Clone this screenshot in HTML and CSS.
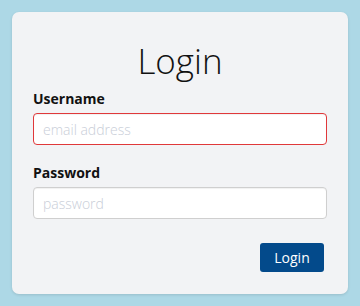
FILE: index.html
```html
<!DOCTYPE html>
<html>
<head>
<meta charset="utf-8">
<link rel="stylesheet" href="styles.css">
</head>
<body>
<div class="card">
  <h1 class="title">Login</h1>
  <form class="form">
    <label class="label" for="u">Username</label>
    <input class="input input-error" id="u" type="text" placeholder="email address">
    <label class="label label-second" for="p">Password</label>
    <input class="input" id="p" type="password" placeholder="password">
    <div class="actions">
      <button class="btn" type="button">Login</button>
    </div>
  </form>
</div>
</body>
</html>
```
FILE: styles.css
```css
html, body {
  margin: 0;
  padding: 0;
}
body {
  background: #add8e6;
  width: 360px;
  height: 306px;
  padding: 12px;
  box-sizing: border-box;
  font-family: "Open Sans", sans-serif;
}
.card {
  background: #f2f3f5;
  border-radius: 7px;
  box-shadow: 0 1px 3px rgba(0,0,0,0.12);
  width: 336px;
  height: 282px;
  box-sizing: border-box;
  padding: 0 21px;
}
.title {
  margin: 0;
  padding-top: 25px;
  font-weight: 300;
  font-size: 35px;
  line-height: 48px;
  text-align: center;
  color: #111;
}
.form {
  display: flex;
  flex-direction: column;
}
.label {
  font-weight: 700;
  font-size: 14px;
  line-height: 20px;
  color: #111;
  margin-top: 4px;
  margin-bottom: 4px;
}
.label-second {
  margin-top: 18px;
}
.input {
  height: 32px;
  box-sizing: border-box;
  border: 1px solid #cfcfcf;
  border-radius: 4px;
  background: #fff;
  box-shadow: inset 0 1px 1px rgba(0,0,0,0.06);
  padding: 0 9px;
  font-family: "Open Sans", sans-serif;
  font-weight: 300;
  font-size: 14px;
  margin: 0;
  outline: none;
}
.input::placeholder {
  color: #c9ced8;
}
.input-error {
  border-color: #e0383a;
}
.actions {
  display: flex;
  justify-content: flex-end;
  margin-top: 24px;
  padding-right: 3px;
}
.btn {
  background: #034a8b;
  color: #fff;
  border: none;
  border-radius: 3px;
  height: 29px;
  width: 64px;
  font-family: "Open Sans", sans-serif;
  font-size: 14px;
  padding: 0;
}
```
